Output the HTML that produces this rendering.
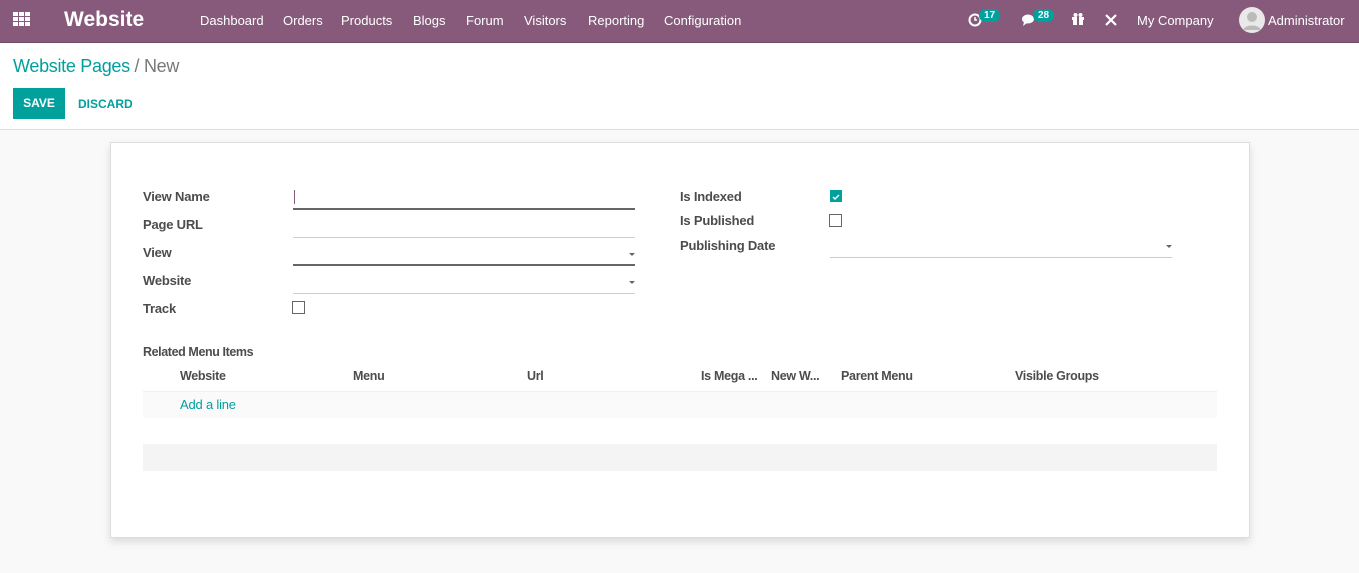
<!DOCTYPE html>
<html><head><style>
*{margin:0;padding:0;box-sizing:border-box}
body{width:1359px;height:573px;overflow:hidden;background:#f9f9f9;font-family:"Liberation Sans",Arial,sans-serif;color:#4c4c4c;position:relative}
.nav{position:absolute;left:0;top:0;width:1359px;height:43px;background:#875a7b;border-bottom:1px solid #6e4a65;color:#fff}
.nav span{position:absolute;top:13px;font-size:13px;white-space:nowrap}
.top{position:absolute;left:0;top:43px;width:1359px;height:87px;background:#fff;border-bottom:1px solid #ddd}
.abs{position:absolute;white-space:nowrap}
.card{position:absolute;left:110px;top:142px;width:1140px;height:396px;background:#fff;border:1px solid #ddd;box-shadow:0 4px 8px rgba(0,0,0,.12)}
.lbl{font-size:13px;font-weight:bold;color:#4c4c4c;letter-spacing:-0.2px}
.line{position:absolute;height:1px;background:#ccc}
.cb{position:absolute;width:13px;height:13px;border:1px solid #666;background:#fff}
.th{font-size:12.5px;font-weight:bold;color:#4c4c4c;letter-spacing:-0.3px}
.caret{position:absolute;width:0;height:0;border-left:3px solid transparent;border-right:3px solid transparent;border-top:3px solid #666}
.badge{position:absolute;background:#00a09d;color:#fff;font-size:10px;font-weight:bold;border-radius:8px;padding:1px 5px;top:9px}
</style></head><body>
<div class="nav">
<svg style="position:absolute;left:13px;top:12px" width="18" height="15"><g fill="#fff"><rect x="0" y="0" width="5" height="4"/><rect x="6" y="0" width="5" height="4"/><rect x="12" y="0" width="5" height="4"/><rect x="0" y="5" width="5" height="4"/><rect x="6" y="5" width="5" height="4"/><rect x="12" y="5" width="5" height="4"/><rect x="0" y="10" width="5" height="4"/><rect x="6" y="10" width="5" height="4"/><rect x="12" y="10" width="5" height="4"/></g></svg>
<span style="left:64px;top:8px;font-size:21px;font-weight:bold">Website</span>
<span style="left:200px">Dashboard</span><span style="left:283px">Orders</span><span style="left:341px">Products</span><span style="left:413px">Blogs</span><span style="left:466px">Forum</span><span style="left:524px">Visitors</span><span style="left:588px">Reporting</span><span style="left:664px">Configuration</span>
<svg style="position:absolute;left:968px;top:13px" width="14" height="14"><circle cx="7" cy="7" r="5.5" fill="none" stroke="#fff" stroke-width="2"/><path d="M7 4v3h2" stroke="#fff" stroke-width="1.5" fill="none"/></svg>
<div class="badge" style="left:979px">17</div>
<svg style="position:absolute;left:1021px;top:13px" width="16" height="14"><ellipse cx="7" cy="6" rx="6" ry="4.5" fill="#fff"/><path d="M3 9l-1 4 4-3z" fill="#fff"/></svg>
<div class="badge" style="left:1033px">28</div>
<svg style="position:absolute;left:1071px;top:12px" width="14" height="14"><rect x="1" y="5" width="12" height="3" fill="#fff"/><rect x="2" y="8" width="10" height="5" fill="#fff"/><rect x="6" y="5" width="2" height="8" fill="#875a7b"/><circle cx="4.5" cy="3" r="2" fill="#fff"/><circle cx="9.5" cy="3" r="2" fill="#fff"/></svg>
<svg style="position:absolute;left:1104px;top:13px" width="14" height="14"><path d="M2 2l10 10M12 2L2 12" stroke="#fff" stroke-width="2.2"/></svg>
<span style="left:1137px">My Company</span>
<svg style="position:absolute;left:1239px;top:7px" width="26" height="26"><circle cx="13" cy="13" r="13" fill="#e9e9e9"/><circle cx="13" cy="10" r="5" fill="#bbb"/><path d="M4 23c2-6 16-6 18 0" fill="#bbb"/></svg>
<span style="left:1268px">Administrator</span>
</div>
<div class="top">
<div class="abs" style="left:13px;top:13px;font-size:18px;color:#00a09d;letter-spacing:-0.3px">Website Pages <span style="color:#777">/ New</span></div>
<div class="abs" style="left:13px;top:45px;width:52px;height:31px;background:#00a09d;color:#fff;font-size:12px;font-weight:bold;text-align:center;line-height:31px">SAVE</div>
<div class="abs" style="left:78px;top:54px;font-size:12px;font-weight:bold;color:#00a09d">DISCARD</div>
</div>
<div class="card"></div>
<div class="abs lbl" style="left:143px;top:189px">View Name</div>
<div class="abs lbl" style="left:143px;top:217px">Page URL</div>
<div class="abs lbl" style="left:143px;top:245px">View</div>
<div class="abs lbl" style="left:143px;top:273px">Website</div>
<div class="abs lbl" style="left:143px;top:301px">Track</div>
<div class="abs" style="left:294px;top:190px;width:1px;height:14px;background:#875a7b"></div>
<div class="line" style="left:293px;top:208px;width:342px;height:2px;background:#666"></div>
<div class="line" style="left:293px;top:237px;width:342px"></div>
<div class="line" style="left:293px;top:264px;width:342px;height:2px;background:#666"></div>
<div class="line" style="left:293px;top:293px;width:342px"></div>
<div class="caret" style="left:629px;top:253px"></div>
<div class="caret" style="left:629px;top:281px"></div>
<div class="cb" style="left:292px;top:301px"></div>
<div class="abs lbl" style="left:680px;top:189px">Is Indexed</div>
<div class="abs lbl" style="left:680px;top:213px">Is Published</div>
<div class="abs lbl" style="left:680px;top:238px">Publishing Date</div>
<div class="abs" style="left:830px;top:190px;width:12px;height:12px;background:#00a09d"><svg width="12" height="12"><path d="M3 6l2 2 4-4" stroke="#fff" stroke-width="1.4" fill="none"/></svg></div>
<div class="cb" style="left:829px;top:214px"></div>
<div class="line" style="left:830px;top:257px;width:342px"></div>
<div class="caret" style="left:1166px;top:245px"></div>
<div class="abs lbl" style="left:143px;top:345px;font-size:12.5px;letter-spacing:-0.4px">Related Menu Items</div>
<div class="abs th" style="left:180px;top:369px">Website</div>
<div class="abs th" style="left:353px;top:369px">Menu</div>
<div class="abs th" style="left:527px;top:369px">Url</div>
<div class="abs th" style="left:701px;top:369px">Is Mega ...</div>
<div class="abs th" style="left:771px;top:369px">New W...</div>
<div class="abs th" style="left:841px;top:369px">Parent Menu</div>
<div class="abs th" style="left:1015px;top:369px">Visible Groups</div>
<div class="abs" style="left:143px;top:391px;width:1074px;height:27px;background:#fafafa;border-top:1px solid #f0f0f0"></div>
<div class="abs" style="left:180px;top:397px;font-size:13px;color:#00a09d;letter-spacing:-0.2px">Add a line</div>
<div class="abs" style="left:143px;top:444px;width:1074px;height:27px;background:#f4f4f4"></div>
</body></html>
